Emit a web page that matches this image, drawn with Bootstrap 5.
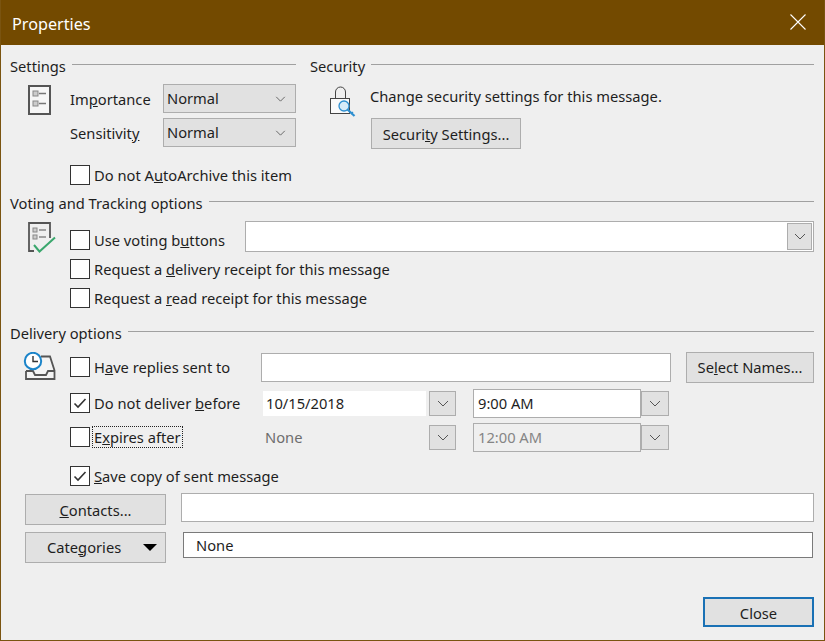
<!DOCTYPE html>
<html lang="en">
<head>
<meta charset="UTF-8">
<meta name="viewport" content="width=device-width, initial-scale=1.0">
<title>Properties</title>
<link href="https://cdn.jsdelivr.net/npm/bootstrap@5.3.0/dist/css/bootstrap.min.css" rel="stylesheet">
<style>
  html, body { margin: 0; background: #efefef; }
  body { font-family: "Noto Sans", "Liberation Sans", sans-serif; font-size: 14.7px; color: #1e1e1e; line-height: 20px; }
  .dlg { width: 825px; height: 641px; background: #efefef; border: 1px solid #7a5410; border-top: 0; overflow: hidden; }
  .dlg-title { height: 45px; background: #734a00; color: #fff; font-size: 16.2px; margin: 0 -1px; padding: 1px 13px 0 12px; }
  .dlg-name { padding-top: 2px; }
  .dlg-x { background: none; border: 0; padding: 0; line-height: 0; margin: -3px 6px 0 0; }
  .dlg-main { padding: 11px 10px 0 9px; }
  .sec-head { height: 20px; }
  .sec-head::after { content: ""; flex: 1; border-top: 1px solid #a0a0a0; margin: 8px 0 0 6px; }
  .col-settings { width: 286px; }
  .col-security { width: 504px; margin-left: 14px; }
  .ico-col { width: 60px; flex-shrink: 0; }
  .fld-sel { width: 133px; height: 29px; margin-left: auto; padding: 0 0 0 3px; font-size: 14.7px; color: #1e1e1e; background-color: #e1e1e1; border: 1px solid #adadad; border-radius: 0;
    background-image: url("data:image/svg+xml,%3csvg xmlns='http://www.w3.org/2000/svg' viewBox='0 0 12 7'%3e%3cpath fill='none' stroke='%23555' d='M1 1l5 5 5-5'/%3e%3c/svg%3e");
    background-size: 11px 6px; background-position: right 9px center; }
  .fld { height: 29px; padding: 0 4px; font-size: 14.7px; color: #1e1e1e; background: #fff; border: 1px solid #adadad; border-radius: 0; }
  .btn-win { background: #e1e1e1; border: 1px solid #adadad; border-radius: 0; color: #1e1e1e; font-size: 14.7px; padding: 0; line-height: 20px; }
  .btn-drop { width: 27px; height: 25px; flex-shrink: 0; background: #e1e1e1; border: 1px solid #adadad; border-radius: 0; padding: 0; line-height: 0; }
  .form-check-input.chk { width: 20px; height: 20px; margin: 0 4px 0 0; flex-shrink: 0; background-color: #fff; border: 1px solid #333; border-radius: 0; }
  .form-check-input.chk:checked { background-color: #fff; border-color: #333; background-size: 16px 16px;
    background-image: url("data:image/svg+xml,%3csvg xmlns='http://www.w3.org/2000/svg' viewBox='0 0 16 16'%3e%3cpath fill='none' stroke='%23333' stroke-width='1.6' d='M2.5 8.5l3.5 3.5 7.5-8'/%3e%3c/svg%3e"); }
  .lab-imp { width: 93px; }
  .sp-8 { margin-top: 8px; }
  .sp-5 { margin-top: 5px; }
  .sp-18 { margin-top: 18px; }
  .sp-7 { margin-top: 7px; }
  .sp-9 { margin-top: 9px; }
  .sp-15 { margin-top: 15px; }
  .sp-6 { margin-top: 6px; }
  .sp-14 { margin-top: 14px; }
  .ic-settings { margin: 1px 0 0 18px; }
  .ic-lock { margin: 2px 0 0 19px; }
  .ic-vote { margin: 1px 0 0 18px; }
  .ic-deliv { margin: 0 0 0 13px; }
  .sec-txt { padding-top: 2px; }
  .sec-btn { width: 150px; height: 31px; margin: 12px 0 0 1px; }
  .vote-lab { width: 175px; padding-top: 7px; }
  .vote-box { width: 569px; height: 31px; padding: 1px 1px 1px 0; background: #fff; border: 1px solid #adadad; }
  .vote-box .btn-drop { height: 27px; margin-left: auto; width: 25px; }
  .deliv-lab { width: 191px; padding-bottom: 1px; }
  .rep-in { width: 410px; height: 29px; }
  .names-btn { width: 128px; height: 31px; margin-left: 15px; padding-bottom: 2px; }
  .date-fld { width: 163px; height: 25px; margin: 0 3px 0 2px; padding: 0 3px; background: #fff; line-height: 24px; }
  .date-off { background: none; color: #6d6d6d; padding-left: 2px; }
  .time-fld { width: 168px; margin-left: 17px; padding-bottom: 2px; }
  .time-off { background: #efefef; color: #858585; }
  .time-fld + .btn-drop { width: 28px; }
  .focus-lab { outline: 1px dotted #222; margin-left: -1px; padding: 0 1px; }
  .low-row { margin-left: 15px; }
  .low-btn { width: 141px; height: 31px; flex-shrink: 0; }
  .cont-btn { margin-top: 1px; }
  .cont-in { width: 634px; height: 29px; margin-left: 15px; }
  .cat-btn { padding: 0 0 2px 21px; }
  .cat-arrow { width: 0; height: 0; margin: 2px 8px 0 auto; border-left: 7px solid transparent; border-right: 7px solid transparent; border-top: 7px solid #000; }
  .none-box { width: 630px; height: 26px; margin-left: 17px; padding: 0 12px; background: #fff; border: 1px solid #7a7a7a; line-height: 24px; }
  .close-row { margin-top: 34px; }
  .close-btn { width: 111px; height: 30px; padding-top: 1px; border: 2px solid #1a71b5; }
</style>
</head>
<body>
<div class="dlg">
  <div class="dlg-title d-flex align-items-center justify-content-between">
    <span class="dlg-name">Properties</span>
    <button class="dlg-x" type="button" aria-label="Close">
      <svg width="16" height="16" viewBox="0 0 16 16"><path fill="none" stroke="#fff" stroke-width="1.1" d="M.5.5l15 15M15.5.5l-15 15"/></svg>
    </button>
  </div>

  <div class="dlg-main">
    <div class="d-flex">
      <div class="col-settings">
        <div class="sec-head d-flex align-items-start">Settings</div>
        <div class="d-flex sp-8">
          <div class="ico-col">
            <svg class="ic-settings d-block" width="24" height="30" viewBox="0 0 24 30">
              <rect x="1" y="1" width="21" height="28" fill="#f6f6f6" stroke="#555" stroke-width="2"/>
              <rect x="5" y="6" width="5" height="5" fill="#ccc" stroke="#888"/>
              <rect x="5" y="16" width="5" height="5" fill="#ccc" stroke="#888"/>
              <path stroke="#777" stroke-width="1.5" d="M11 8.5h7M11 18.5h7"/>
            </svg>
          </div>
          <div class="flex-grow-1">
            <div class="d-flex align-items-center">
              <span class="lab-imp">Im<u>p</u>ortance</span>
              <select class="form-select fld-sel"><option>Normal</option></select>
            </div>
            <div class="d-flex align-items-center sp-5">
              <span class="lab-imp">Sensitivit<u>y</u></span>
              <select class="form-select fld-sel"><option>Normal</option></select>
            </div>
            <div class="d-flex align-items-center sp-18">
              <input class="form-check-input chk" type="checkbox">
              <span>Do not A<u>u</u>toArchive this item</span>
            </div>
          </div>
        </div>
      </div>
      <div class="col-security">
        <div class="sec-head d-flex align-items-start">Security</div>
        <div class="d-flex sp-8">
          <div class="ico-col">
            <svg class="ic-lock d-block" width="28" height="33" viewBox="0 0 28 33">
              <path fill="none" stroke="#444" d="M6.5 12.5V6a5 5 0 0 1 10 0v6.5"/>
              <rect x="1.5" y="12.5" width="19" height="15" fill="#fafafa" stroke="#444"/>
              <circle cx="15" cy="20" r="5" fill="#d7ebf8" stroke="#2e8fd0" stroke-width="1.3"/>
              <path fill="none" stroke="#2e8fd0" stroke-width="2.2" d="M18.5 23.5l7 6.5"/>
              <path fill="none" stroke="#2e8fd0" stroke-width="1.3" d="M22 28l2-2"/>
            </svg>
          </div>
          <div class="sec-txt">
            <div>Change security settings for this message.</div>
            <button class="btn btn-win sec-btn" type="button">Securi<u>t</u>y Settings...</button>
          </div>
        </div>
      </div>
    </div>

    <div class="sec-head d-flex align-items-start sp-8">Voting and Tracking options</div>
    <div class="d-flex sp-8">
      <div class="ico-col">
        <svg class="ic-vote d-block" width="30" height="32" viewBox="0 0 30 32">
          <path fill="none" stroke="#555" stroke-width="1.8" d="M6 29H1V1h21v15"/>
          <rect x="5" y="6" width="4" height="4" fill="#ccc" stroke="#888"/>
          <rect x="5" y="13" width="4" height="4" fill="#ccc" stroke="#888"/>
          <path stroke="#888" stroke-width="1.3" d="M11 8h7M11 15h7"/>
          <path fill="none" stroke="#3aa76d" stroke-width="2" d="M6 23l5.500 6.500L27 15.500"/>
        </svg>
      </div>
      <div class="flex-grow-1">
        <div class="d-flex">
          <div class="vote-lab d-flex align-items-center">
            <input class="form-check-input chk" type="checkbox">
            <span>Use voting b<u>u</u>ttons</span>
          </div>
          <div class="vote-box d-flex">
            <button class="btn-drop" type="button"><svg width="12" height="7" viewBox="0 0 12 7"><path fill="none" stroke="#555" d="M1 1l5 5 5-5"/></svg></button>
          </div>
        </div>
        <div class="d-flex align-items-center sp-7">
          <input class="form-check-input chk" type="checkbox">
          <span>Request a <u>d</u>elivery receipt for this message</span>
        </div>
        <div class="d-flex align-items-center sp-9">
          <input class="form-check-input chk" type="checkbox">
          <span>Request a <u>r</u>ead receipt for this message</span>
        </div>
      </div>
    </div>

    <div class="sec-head d-flex align-items-start sp-15">Delivery options</div>
    <div class="d-flex sp-9">
      <div class="ico-col">
        <svg class="ic-deliv d-block" width="34" height="32" viewBox="0 0 34 32">
          <path fill="#f4f4f4" stroke="#555" stroke-width="1.8" d="M18 4.500h9l4.500 14v8.500H3V19"/>
          <path fill="none" stroke="#555" stroke-width="1.8" d="M3 19h7l2 4h11l2-4h6.500"/>
          <circle cx="10" cy="9" r="8.200" fill="#fff" stroke="#1b84c9" stroke-width="2"/>
          <path fill="none" stroke="#333" stroke-width="1.4" d="M10 4v5.500h5"/>
        </svg>
      </div>
      <div class="flex-grow-1">
        <div class="d-flex align-items-center">
          <div class="deliv-lab d-flex align-items-center">
            <input class="form-check-input chk" type="checkbox">
            <span>H<u>a</u>ve replies sent to</span>
          </div>
          <input class="form-control fld rep-in" type="text">
          <button class="btn btn-win names-btn" type="button">Se<u>l</u>ect Names...</button>
        </div>
        <div class="d-flex align-items-center sp-6">
          <div class="deliv-lab d-flex align-items-center">
            <input class="form-check-input chk" type="checkbox" checked>
            <span>Do not deliver <u>b</u>efore</span>
          </div>
          <div class="date-fld">10/15/2018</div>
          <button class="btn-drop" type="button"><svg width="12" height="7" viewBox="0 0 12 7"><path fill="none" stroke="#555" d="M1 1l5 5 5-5"/></svg></button>
          <input class="form-control fld time-fld" type="text" value="9:00 AM">
          <button class="btn-drop" type="button"><svg width="12" height="7" viewBox="0 0 12 7"><path fill="none" stroke="#555" d="M1 1l5 5 5-5"/></svg></button>
        </div>
        <div class="d-flex align-items-center sp-5">
          <div class="deliv-lab d-flex align-items-center">
            <input class="form-check-input chk" type="checkbox">
            <span class="focus-lab">E<u>x</u>pires after</span>
          </div>
          <div class="date-fld date-off">None</div>
          <button class="btn-drop" type="button"><svg width="12" height="7" viewBox="0 0 12 7"><path fill="none" stroke="#555" d="M1 1l5 5 5-5"/></svg></button>
          <div class="fld time-fld time-off d-flex align-items-center">12:00 AM</div>
          <button class="btn-drop" type="button"><svg width="12" height="7" viewBox="0 0 12 7"><path fill="none" stroke="#555" d="M1 1l5 5 5-5"/></svg></button>
        </div>
        <div class="d-flex align-items-center sp-14">
          <input class="form-check-input chk" type="checkbox" checked>
          <span><u>S</u>ave copy of sent message</span>
        </div>
      </div>
    </div>

    <div class="d-flex align-items-start low-row sp-7">
      <button class="btn btn-win low-btn cont-btn" type="button"><u>C</u>ontacts...</button>
      <input class="form-control fld cont-in" type="text">
    </div>
    <div class="d-flex align-items-start low-row sp-7">
      <button class="btn btn-win low-btn cat-btn d-flex align-items-center" type="button">Cate<u>g</u>ories<span class="cat-arrow"></span></button>
      <div class="none-box">None</div>
    </div>
    <div class="d-flex justify-content-end close-row">
      <button class="btn btn-win close-btn" type="button">Close</button>
    </div>
  </div>
</div>
<script src="https://cdn.jsdelivr.net/npm/bootstrap@5.3.0/dist/js/bootstrap.bundle.min.js"></script>
</body>
</html>
